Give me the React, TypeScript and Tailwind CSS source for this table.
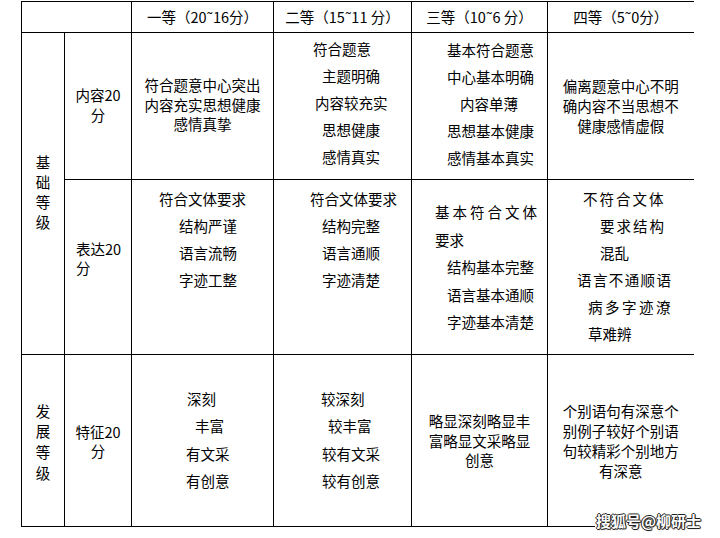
import React from "react";

type Line = { t: string; c: string };

const Lines = ({ lines, lead }: { lines: Line[]; lead: string }) => (
  <div className={lead}>
    {lines.map((l, i) => (
      <div key={i} className={"whitespace-nowrap " + l.c}>
        {l.t}
      </div>
    ))}
  </div>
);

const td = "border border-black p-0 align-top";
const tdLast = "border border-black border-r-0 p-0 align-top";

export default function App() {
  return (
    <div className="w-[720px] h-[538px] bg-white text-black relative overflow-hidden font-['Noto_Sans_CJK_SC','Noto_Sans',sans-serif] text-[14.5px]">
      <table className="ml-[21px] mt-[1px] border-collapse table-fixed w-[672px]">
        <colgroup>
          <col className="w-[43px]" />
          <col className="w-[67px]" />
          <col className="w-[142px]" />
          <col className="w-[138px]" />
          <col className="w-[136px]" />
          <col className="w-[146px]" />
        </colgroup>
        <tbody>
          <tr className="h-[31px]">
            <td colSpan={2} className="border border-black p-0"></td>
            <td className="border border-black p-0 text-center align-middle whitespace-nowrap">一等（20˜16分）</td>
            <td className="border border-black p-0 text-center align-middle whitespace-nowrap">二等（15˜11 分）</td>
            <td className="border border-black p-0 text-center align-middle whitespace-nowrap">三等（10˜6 分）</td>
            <td className="border border-black border-r-0 p-0 text-center align-middle whitespace-nowrap">四等（5˜0分）</td>
          </tr>
          <tr className="h-[147px]">
            <td rowSpan={2} className="border border-black p-0 align-middle">
              <div className="flex flex-col items-center leading-[20px] pb-[4px]">
                <div>基</div>
                <div>础</div>
                <div>等</div>
                <div>级</div>
              </div>
            </td>
            <td className="border border-black p-0 align-middle text-center">
              <div className="leading-[20px] pb-[2px]">
                <div>内容20</div>
                <div>分</div>
              </div>
            </td>
            <td className="border border-black p-0 align-middle text-center">
              <div className="leading-[19.5px] pb-[3px]">
                <div>符合题意中心突出</div>
                <div>内容充实思想健康</div>
                <div>感情真挚</div>
              </div>
            </td>
            <td className={td}>
              <div className="pt-[2px]">
                <Lines
                  lead="leading-[27px]"
                  lines={[
                    { t: "符合题意", c: "pl-[39px]" },
                    { t: "主题明确", c: "pl-[48px]" },
                    { t: "内容较充实", c: "pl-[41px]" },
                    { t: "思想健康", c: "pl-[48px]" },
                    { t: "感情真实", c: "pl-[48px]" },
                  ]}
                />
              </div>
            </td>
            <td className={td}>
              <div className="pt-[3px]">
                <Lines
                  lead="leading-[27px]"
                  lines={[
                    { t: "基本符合题意", c: "pl-[35px]" },
                    { t: "中心基本明确", c: "pl-[35px]" },
                    { t: "内容单薄", c: "pl-[48px]" },
                    { t: "思想基本健康", c: "pl-[35px]" },
                    { t: "感情基本真实", c: "pl-[35px]" },
                  ]}
                />
              </div>
            </td>
            <td className="border border-black border-r-0 p-0 align-middle text-center">
              <div className="leading-[20px] pb-[1px]">
                <div>偏离题意中心不明</div>
                <div>确内容不当思想不</div>
                <div>健康感情虚假</div>
              </div>
            </td>
          </tr>
          <tr className="h-[175px]">
            <td className={td}>
              <div className="pt-[59px] pl-[11px] leading-[19px]">
                <div>表达20</div>
                <div>分</div>
              </div>
            </td>
            <td className={td}>
              <div className="pt-[5px]">
                <Lines
                  lead="leading-[27px]"
                  lines={[
                    { t: "符合文体要求", c: "pl-[27px]" },
                    { t: "结构严谨", c: "pl-[47px]" },
                    { t: "语言流畅", c: "pl-[47px]" },
                    { t: "字迹工整", c: "pl-[47px]" },
                  ]}
                />
              </div>
            </td>
            <td className={td}>
              <div className="pt-[5px]">
                <Lines
                  lead="leading-[27px]"
                  lines={[
                    { t: "符合文体要求", c: "pl-[36px]" },
                    { t: "结构完整", c: "pl-[48px]" },
                    { t: "语言通顺", c: "pl-[48px]" },
                    { t: "字迹清楚", c: "pl-[48px]" },
                  ]}
                />
              </div>
            </td>
            <td className={td}>
              <div className="pt-[18px]">
                <Lines
                  lead="leading-[27.5px]"
                  lines={[
                    { t: "基本符合文体", c: "pl-[23px] tracking-[3px]" },
                    { t: "要求", c: "pl-[23px]" },
                    { t: "结构基本完整", c: "pl-[35px]" },
                    { t: "语言基本通顺", c: "pl-[35px]" },
                    { t: "字迹基本清楚", c: "pl-[35px]" },
                  ]}
                />
              </div>
            </td>
            <td className={tdLast}>
              <div className="pt-[5px]">
                <Lines
                  lead="leading-[27px]"
                  lines={[
                    { t: "不符合文体", c: "pl-[35px] tracking-[2px]" },
                    { t: "要求结构", c: "pl-[52px] tracking-[2px]" },
                    { t: "混乱", c: "pl-[52px]" },
                    { t: "语言不通顺语", c: "pl-[29px] tracking-[1.4px]" },
                    { t: "病多字迹潦", c: "pl-[40px] tracking-[2.5px]" },
                    { t: "草难辨", c: "pl-[40px]" },
                  ]}
                />
              </div>
            </td>
          </tr>
          <tr className="h-[172px]">
            <td className="border border-black p-0 align-middle">
              <div className="flex flex-col items-center leading-[20.7px] pt-[3px]">
                <div>发</div>
                <div>展</div>
                <div>等</div>
                <div>级</div>
              </div>
            </td>
            <td className="border border-black p-0 align-middle text-center">
              <div className="leading-[19px] pt-[1px]">
                <div>特征20</div>
                <div>分</div>
              </div>
            </td>
            <td className={td}>
              <div className="pt-[30px]">
                <Lines
                  lead="leading-[27.3px]"
                  lines={[
                    { t: "深刻", c: "pl-[55px]" },
                    { t: "丰富", c: "pl-[63px]" },
                    { t: "有文采", c: "pl-[54px]" },
                    { t: "有创意", c: "pl-[54px]" },
                  ]}
                />
              </div>
            </td>
            <td className={td}>
              <div className="pt-[30px]">
                <Lines
                  lead="leading-[27.3px]"
                  lines={[
                    { t: "较深刻", c: "pl-[47px]" },
                    { t: "较丰富", c: "pl-[54px]" },
                    { t: "较有文采", c: "pl-[48px]" },
                    { t: "较有创意", c: "pl-[48px]" },
                  ]}
                />
              </div>
            </td>
            <td className="border border-black p-0 align-middle text-center">
              <div className="leading-[19.5px]">
                <div>略显深刻略显丰</div>
                <div>富略显文采略显</div>
                <div>创意</div>
              </div>
            </td>
            <td className="border border-black border-r-0 p-0 align-middle text-center">
              <div className="leading-[20px]">
                <div>个别语句有深意个</div>
                <div>别例子较好个别语</div>
                <div>句较精彩个别地方</div>
                <div>有深意</div>
              </div>
            </td>
          </tr>
        </tbody>
      </table>
      <div className="absolute left-[595px] top-[511px] bg-white px-[1px] text-[15px] leading-[20px] font-bold text-white whitespace-nowrap [text-shadow:1px_0_0_#222,-1px_0_0_#222,0_1px_0_#222,0_-1px_0_#222,1px_1px_1px_#555]">
        搜狐号@柳研士
      </div>
    </div>
  );
}
